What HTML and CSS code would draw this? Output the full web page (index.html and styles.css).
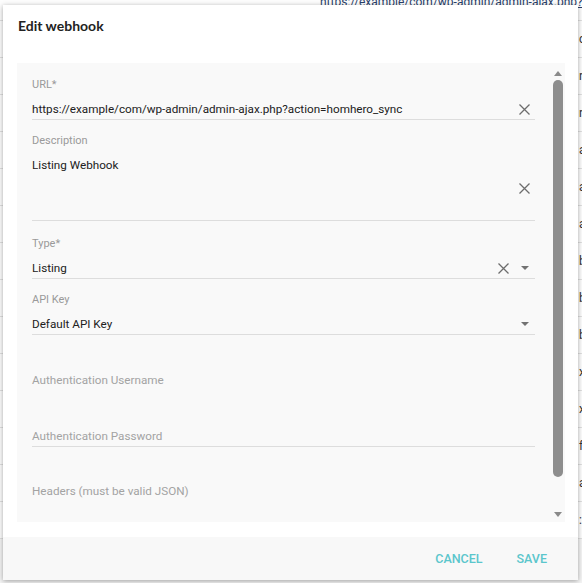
FILE: index.html
```html
<!DOCTYPE html>
<html lang="en">
<head>
<meta charset="utf-8">
<title>Edit webhook</title>
<link rel="stylesheet" href="styles.css">
</head>
<body>
<div class="page">
  <div class="bg-row bg-row--first">https://example/com/wp-admin/admin-ajax.php?action=homhero_sync</div>
  <div class="bg-row">c</div>
  <div class="bg-row">r</div>
  <div class="bg-row">r</div>
  <div class="bg-row">a</div>
  <div class="bg-row">a</div>
  <div class="bg-row">a</div>
  <div class="bg-row">b</div>
  <div class="bg-row">b</div>
  <div class="bg-row">b</div>
  <div class="bg-row">x</div>
  <div class="bg-row">x</div>
  <div class="bg-row">f</div>
  <div class="bg-row">a</div>
  <div class="bg-row">:</div>
</div>

<div class="dialog" role="dialog" aria-label="Edit webhook">
  <h2 class="dialog-title">Edit webhook</h2>
  <div class="dialog-content">
    <form class="form">
      <div class="field">
        <label class="field-label">URL*</label>
        <div class="field-input">
          <span class="field-value">https://example/com/wp-admin/admin-ajax.php?action=homhero_sync</span>
          <svg class="icon-clear" width="11" height="11" viewBox="0 0 11 11"><path d="M0.5 0.5 L10.5 10.5 M10.5 0.5 L0.5 10.5"/></svg>
        </div>
      </div>
      <div class="field field--multi">
        <label class="field-label">Description</label>
        <div class="field-input field-input--multi">
          <span class="field-value">Listing Webhook</span>
          <svg class="icon-clear icon-clear--mid" width="11" height="11" viewBox="0 0 11 11"><path d="M0.5 0.5 L10.5 10.5 M10.5 0.5 L0.5 10.5"/></svg>
        </div>
      </div>
      <div class="field">
        <label class="field-label">Type*</label>
        <div class="field-input">
          <span class="field-value">Listing</span>
          <svg class="icon-clear" width="11" height="11" viewBox="0 0 11 11"><path d="M0.5 0.5 L10.5 10.5 M10.5 0.5 L0.5 10.5"/></svg>
          <span class="caret"></span>
        </div>
      </div>
      <div class="field">
        <label class="field-label">API Key</label>
        <div class="field-input">
          <span class="field-value">Default API Key</span>
          <span class="caret"></span>
        </div>
      </div>
      <div class="field">
        <label class="field-label"></label>
        <div class="field-input field-input--noline">
          <span class="field-placeholder">Authentication Username</span>
        </div>
      </div>
      <div class="field">
        <label class="field-label"></label>
        <div class="field-input">
          <span class="field-placeholder">Authentication Password</span>
        </div>
      </div>
      <div class="field">
        <label class="field-label"></label>
        <div class="field-input field-input--tall">
          <span class="field-placeholder">Headers (must be valid JSON)</span>
        </div>
      </div>
    </form>
    <div class="scrollbar" aria-hidden="true">
      <span class="scroll-up"></span>
      <span class="scroll-thumb"></span>
      <span class="scroll-down"></span>
    </div>
  </div>
  <div class="dialog-actions">
    <button class="btn" type="button">CANCEL</button>
    <button class="btn" type="button">SAVE</button>
  </div>
</div>
</body>
</html>
```

FILE: styles.css
```css
* { box-sizing: border-box; }

html, body {
  margin: 0;
  padding: 0;
  width: 582px;
  height: 583px;
  overflow: hidden;
}

body {
  background: #f4f4f4;
  font-family: Roboto, "Liberation Sans", sans-serif;
  position: relative;
}

/* background page (behind dialog) */
.page {
  display: flex;
  flex-direction: column;
  height: 583px;
  overflow: hidden;
}

.bg-row {
  flex: none;
  height: 37px;
  line-height: 37px;
  padding-left: 579px;
  border-bottom: 1px solid #e0e0e0;
  font-size: 12px;
  color: #333;
  white-space: nowrap;
  overflow: hidden;
  background: #fdfdfd;
}

.bg-row--first {
  margin-top: -16px;
  padding-left: 320px;
  color: #2a3f6a;
  text-decoration: underline;
}

/* dialog */
.dialog {
  position: absolute;
  left: 3px;
  top: 5px;
  width: 575px;
  height: 575px;
  background: #fff;
  display: flex;
  flex-direction: column;
  box-shadow: 0 1px 5px rgba(0, 0, 0, 0.35);
}

.dialog-title {
  margin: 0;
  height: 58px;
  flex: none;
  padding: 12px 15px 0;
  font-family: Lato, "Open Sans", sans-serif;
  font-weight: 700;
  font-size: 14px;
  line-height: 17px;
  color: #222;
}

.dialog-content {
  flex: none;
  height: 459px;
  margin: 0 13px 0 14px;
  background: #f9f9f9;
  display: flex;
  overflow: hidden;
}

.form {
  flex: 1;
  min-width: 0;
  padding: 1px 16px 0 15px;
  margin: 0;
}

.field {
  padding-top: 13px;
}

.field--multi {
  margin-bottom: 2px;
}

.field-label {
  display: block;
  height: 14px;
  font-size: 11px;
  line-height: 15px;
  color: #9a9a9a;
}

.field-input {
  display: flex;
  align-items: center;
  height: 29px;
  padding: 10px 5px 2px 0;
  border-bottom: 1px solid #dddddd;
  line-height: 16px;
}

.field-input--multi {
  height: 74px;
  align-items: flex-start;
}

.field-input--noline {
  border-bottom-color: transparent;
}

.field-input--tall {
  height: 80px;
  align-items: flex-start;
  border-bottom: none;
}

.field-value {
  flex: 1;
  font-size: 11.7px;
  color: #212121;
  white-space: nowrap;
}

.field-placeholder {
  flex: 1;
  margin-top: -1px;
  font-size: 11.7px;
  color: #a3a3a3;
}

.icon-clear {
  flex: none;
  margin-top: 1px;
  fill: none;
  stroke: #6d6d6d;
  stroke-width: 1.3;
}

.icon-clear--mid {
  align-self: center;
  margin-top: 1px;
}

.caret {
  flex: none;
  width: 0;
  height: 0;
  margin-left: 12px;
  margin-right: 1px;
  margin-top: 0;
  border-left: 4px solid transparent;
  border-right: 4px solid transparent;
  border-top: 4px solid #727272;
}

/* custom scrollbar */
.scrollbar {
  flex: none;
  width: 14px;
  display: flex;
  flex-direction: column;
  align-items: center;
}

.scroll-up {
  margin-top: 8px;
  width: 0;
  height: 0;
  border-left: 4.5px solid transparent;
  border-right: 4.5px solid transparent;
  border-bottom: 5px solid #8a8a8a;
}

.scroll-thumb {
  margin-top: 4px;
  width: 10px;
  height: 397px;
  border-radius: 5px;
  background: #8e8e8e;
}

.scroll-down {
  margin-top: 35px;
  width: 0;
  height: 0;
  border-left: 4.5px solid transparent;
  border-right: 4.5px solid transparent;
  border-top: 5px solid #8a8a8a;
}

/* footer actions */
.dialog-actions {
  flex: none;
  margin-top: 15px;
  height: 43px;
  background: #f8f8f8;
  display: flex;
  align-items: center;
  justify-content: flex-end;
  gap: 34px;
  padding-right: 31px;
}

.btn {
  border: none;
  background: none;
  padding: 0;
  font-family: Roboto, "Liberation Sans", sans-serif;
  font-weight: 500;
  font-size: 12.5px;
  line-height: 16px;
  color: #5bc6cc;
  cursor: pointer;
}
```
